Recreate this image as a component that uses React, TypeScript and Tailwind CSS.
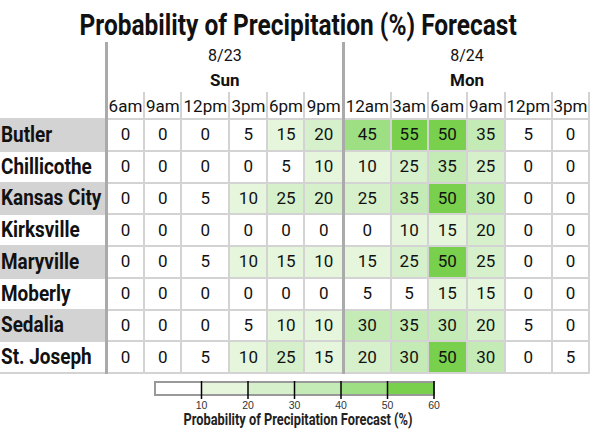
import React from "react";

const sun = ["6am", "9am", "12pm", "3pm", "6pm", "9pm"];
const mon = ["12am", "3am", "6am", "9am", "12pm", "3pm"];
const colWidths = [106, 38, 37, 48, 38, 37, 39, 47, 37, 39, 38, 47, 37];

const rows: { city: string; values: number[] }[] = [
  { city: "Butler", values: [0, 0, 0, 5, 15, 20, 45, 55, 50, 35, 5, 0] },
  { city: "Chillicothe", values: [0, 0, 0, 0, 5, 10, 10, 25, 35, 25, 0, 0] },
  { city: "Kansas City", values: [0, 0, 5, 10, 25, 20, 25, 35, 50, 30, 0, 0] },
  { city: "Kirksville", values: [0, 0, 0, 0, 0, 0, 0, 10, 15, 20, 0, 0] },
  { city: "Maryville", values: [0, 0, 5, 10, 15, 10, 15, 25, 50, 25, 0, 0] },
  { city: "Moberly", values: [0, 0, 0, 0, 0, 0, 5, 5, 15, 15, 0, 0] },
  { city: "Sedalia", values: [0, 0, 0, 5, 10, 10, 30, 35, 30, 20, 5, 0] },
  { city: "St. Joseph", values: [0, 0, 5, 10, 25, 15, 20, 30, 50, 30, 0, 5] },
];

const bins = ["bg-white", "bg-[#e5f6dd]", "bg-[#d6f0cc]", "bg-[#c4ebb5]", "bg-[#9ddf82]", "bg-[#78d04c]"];
const binHex = ["#ffffff", "#e5f6dd", "#d6f0cc", "#c4ebb5", "#9ddf82", "#78d04c"];

function cellBg(v: number) {
  return bins[Math.min(5, Math.floor(v / 10))];
}

const Legend = () => {
  const x0 = 155;
  const w = 46.5;
  return (
    <div className="flex flex-col items-center">
      <svg width="596" height="31" className="block">
        {binHex.map((c, i) => (
          <rect key={i} x={x0 + i * w} y={1} width={w} height={13} fill={c} />
        ))}
        <rect x={x0} y={1} width={w * 6} height={13} fill="none" stroke="#999" strokeWidth={2} />
        {[1, 2, 3, 4, 5, 6].map((i) => (
          <g key={i}>
            <line x1={x0 + i * w} x2={x0 + i * w} y1={0} y2={18} stroke="#000" strokeWidth={1.5} />
            <text
              x={x0 + i * w}
              y={28}
              textAnchor="middle"
              fontSize={10.5}
              fill="#333"
              fontFamily="'Liberation Sans', Arial, sans-serif"
            >
              {i * 10}
            </text>
          </g>
        ))}
      </svg>
      <div className="text-[16px] font-bold leading-[16px] text-[#222] scale-x-[0.8] whitespace-nowrap">
        Probability of Precipitation Forecast (%)
      </div>
    </div>
  );
}

export default function App() {
  return (
    <div className="w-[596px] h-[433px] bg-white text-[#111] font-['Roboto',sans-serif] overflow-hidden">
      <div className="h-[42px] flex justify-center">
        <h1 className="text-[30px] font-bold leading-[42px] pt-[4px] scale-x-[0.815] whitespace-nowrap">
          Probability of Precipitation (%) Forecast
        </h1>
      </div>
      <table className="table-fixed border-collapse w-[590px]">
        <colgroup>
          {colWidths.map((w, i) => (
            <col key={i} style={{ width: w }} />
          ))}
        </colgroup>
        <thead>
          <tr className="h-[24px] text-[16px] leading-none">
            <th />
            <th colSpan={6} className="font-normal pt-[3px] border-l-[3px] border-[#aaa]">8/23</th>
            <th colSpan={6} className="font-normal pt-[3px] border-l-[3px] border-[#aaa]">8/24</th>
          </tr>
          <tr className="h-[26px] text-[17px] leading-none">
            <th />
            <th colSpan={6} className="font-bold pt-[3px] border-l-[3px] border-[#aaa]">Sun</th>
            <th colSpan={6} className="font-bold pt-[3px] border-l-[3px] border-[#aaa]">Mon</th>
          </tr>
          <tr className="h-[27px] text-[17px] leading-none">
            <th className="border-b-2 border-[#d3d3d3]" />
            {[...sun, ...mon].map((t, i) => (
              <th
                key={i}
                className={`font-normal px-0 pt-[2px] border-b-2 border-b-[#d3d3d3] ${
                  i === 0 || i === 6 ? "border-l-[3px] border-l-[#aaa]" : "border-l-2 border-l-[#d3d3d3]"
                } ${i === 11 ? "border-r-2 border-r-[#d3d3d3]" : ""}`}
              >
                {t}
              </th>
            ))}
          </tr>
        </thead>
        <tbody>
          {rows.map((r, ri) => (
            <tr key={r.city} className="h-[31.75px]">
              <td
                className={`text-left text-[22px] font-bold leading-none pl-[1px] whitespace-nowrap border-y-2 border-[#d3d3d3] ${
                  ri % 2 === 0 ? "bg-[#d3d3d3]" : "bg-white"
                }`}
              >
                <span className="inline-block origin-left scale-x-[0.86]">{r.city}</span>
              </td>
              {r.values.map((v, i) => (
                <td
                  key={i}
                  className={`text-center text-[17px] leading-none border-2 border-[#d3d3d3] ${cellBg(v)} ${
                    i === 0 || i === 6 ? "border-l-[3px] border-l-[#aaa]" : ""
                  }`}
                >
                  {v}
                </td>
              ))}
            </tr>
          ))}
        </tbody>
      </table>
      <div className="mt-[7px]">
        <Legend />
      </div>
    </div>
  );
}
